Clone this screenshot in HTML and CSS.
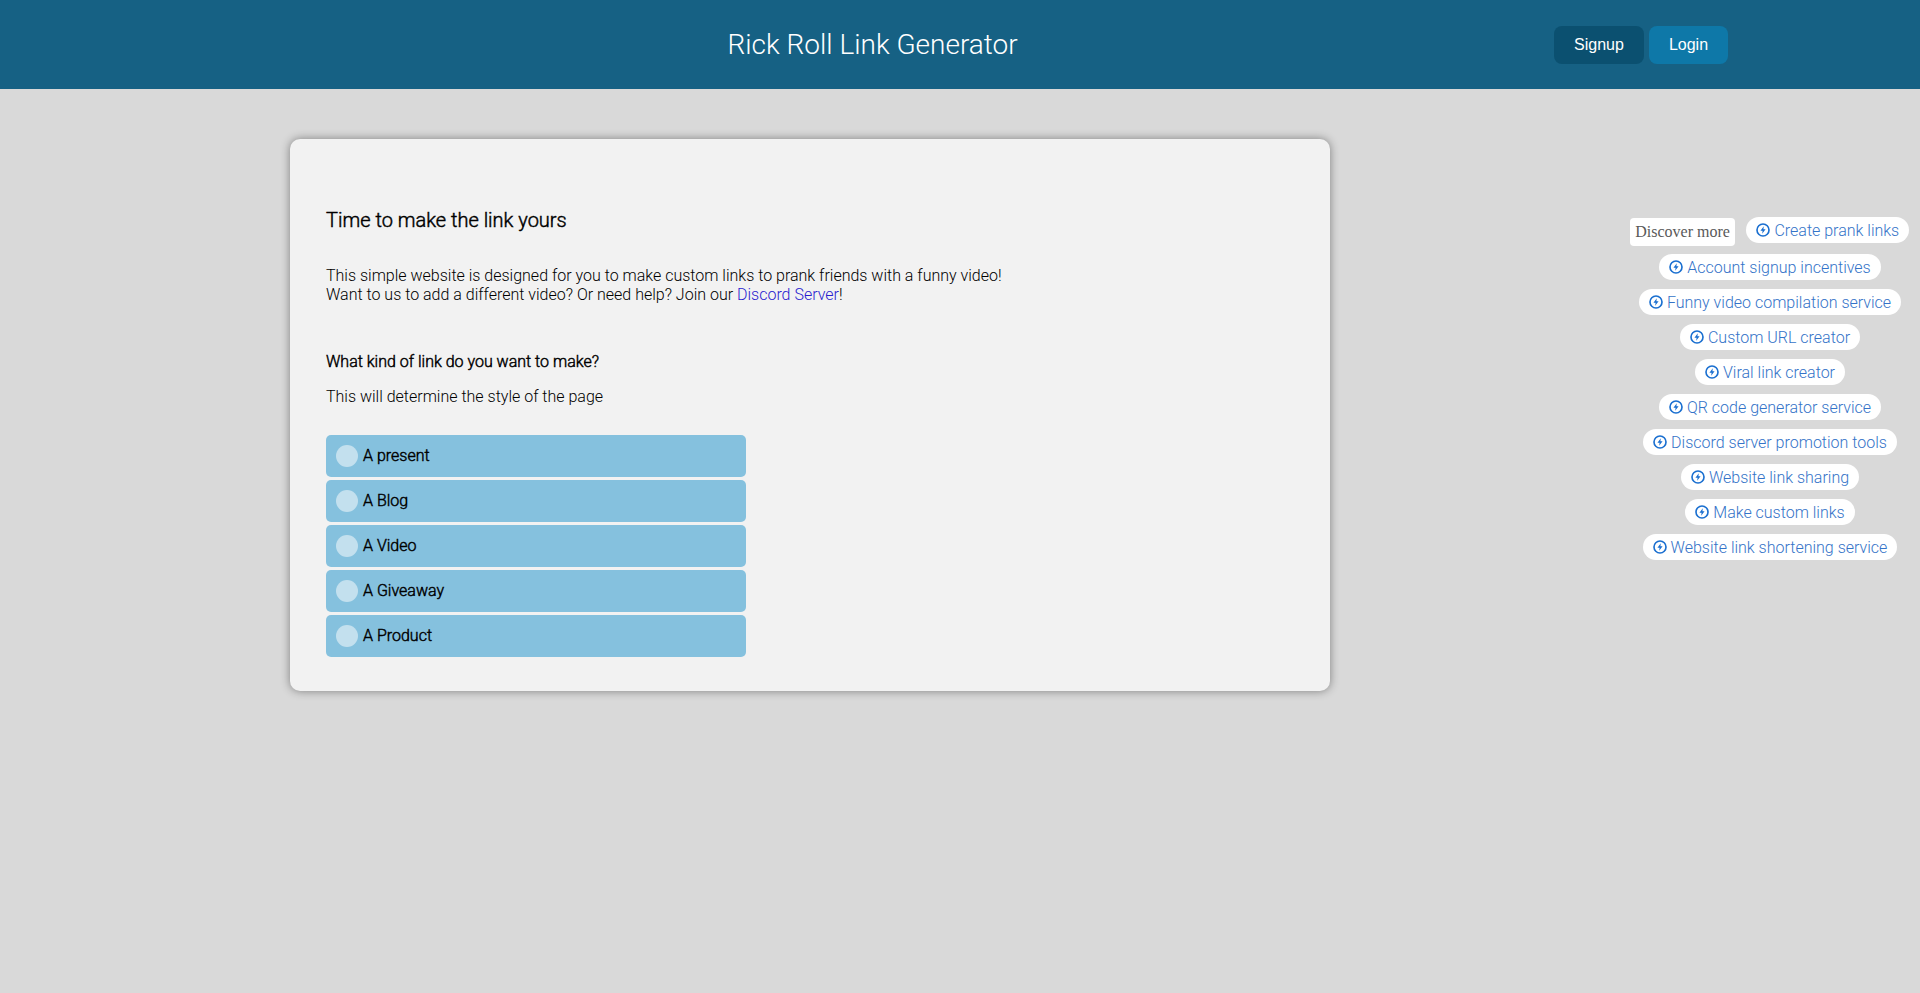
FILE: index.html
```html
<!DOCTYPE html>
<html lang="en">
<head>
<meta charset="utf-8">
<title>Rick Roll Link Generator</title>
<link rel="stylesheet" href="styles.css">
</head>
<body>
<svg class="sprite" width="0" height="0" aria-hidden="true"><symbol id="bolt" viewBox="0 0 24 24"><circle cx="12" cy="12" r="10.3" fill="none" stroke="currentColor" stroke-width="2.8"/><path d="M13.4 5.4 7.6 13.4h3.7l-.7 5.2 5.8-8h-3.7z" fill="currentColor"/></symbol></svg>
<header class="topbar">
  <h1 class="site-title">Rick Roll Link Generator</h1>
  <nav class="auth">
    <a class="btn btn-signup" href="#">Signup</a>
    <a class="btn btn-login" href="#">Login</a>
  </nav>
</header>
<div class="page">
  <main class="card">
    <h2 class="card-title">Time to make the link yours</h2>
    <p class="intro">This simple website is designed for you to make custom links to prank friends with a funny video!<br>Want to us to add a different video? Or need help? Join our <a class="discord" href="#">Discord Server</a>!</p>
    <h3 class="question">What kind of link do you want to make?</h3>
    <p class="hint">This will determine the style of the page</p>
    <div class="options">
      <div class="option"><span class="radio"></span><span class="option-label">A present</span></div>
      <div class="option"><span class="radio"></span><span class="option-label">A Blog</span></div>
      <div class="option"><span class="radio"></span><span class="option-label">A Video</span></div>
      <div class="option"><span class="radio"></span><span class="option-label">A Giveaway</span></div>
      <div class="option"><span class="radio"></span><span class="option-label">A Product</span></div>
    </div>
  </main>
  <aside class="side">
    <span class="discover">Discover more</span>
    <a class="pill" href="#"><svg class="ico"><use href="#bolt"/></svg>Create prank links</a>
    <a class="pill" href="#"><svg class="ico"><use href="#bolt"/></svg>Account signup incentives</a>
    <a class="pill" href="#"><svg class="ico"><use href="#bolt"/></svg>Funny video compilation service</a>
    <a class="pill" href="#"><svg class="ico"><use href="#bolt"/></svg>Custom URL creator</a>
    <a class="pill" href="#"><svg class="ico"><use href="#bolt"/></svg>Viral link creator</a>
    <a class="pill" href="#"><svg class="ico"><use href="#bolt"/></svg>QR code generator service</a>
    <a class="pill" href="#"><svg class="ico"><use href="#bolt"/></svg>Discord server promotion tools</a>
    <a class="pill" href="#"><svg class="ico"><use href="#bolt"/></svg>Website link sharing</a>
    <a class="pill" href="#"><svg class="ico"><use href="#bolt"/></svg>Make custom links</a>
    <a class="pill" href="#"><svg class="ico"><use href="#bolt"/></svg>Website link shortening service</a>
  </aside>
</div>
</body>
</html>
```
FILE: styles.css
```css
* { box-sizing: border-box; }
html, body { margin: 0; height: 100%; }
body {
  background: #d9d9d9;
  font-family: Roboto, "Liberation Sans", sans-serif;
  font-weight: 300;
  font-size: 16px;
  color: #000;
  overflow: hidden;
}
.sprite { position: absolute; }
.topbar {
  height: 89px;
  background: #166184;
  display: flex;
  align-items: center;
  padding-left: 727.5px;
}
.site-title {
  margin: 0;
  font-size: 28px;
  font-weight: 300;
  color: #fff;
  line-height: 1;
}
.auth {
  display: flex;
  gap: 5px;
  margin-left: auto;
  margin-right: 192px;
}
.btn {
  display: flex;
  align-items: center;
  justify-content: center;
  height: 38px;
  border-radius: 8px;
  color: #fff;
  text-decoration: none;
  font-family: "Liberation Sans", Arial, sans-serif;
  font-weight: 400;
  font-size: 16px;
}
.btn-signup { width: 90px; background: #0b5070; }
.btn-login { width: 79px; background: #0e78a8; }
.page {
  display: flex;
  align-items: flex-start;
  padding: 50px 0 0 290px;
}
.card {
  width: 1040px;
  height: 552px;
  background: #f2f2f2;
  border-radius: 10px;
  box-shadow: 0 0 10px rgba(0, 0, 0, .42);
  padding: 70px 36px 0;
}
.card-title {
  margin: 0;
  font-size: 20px;
  line-height: 23px;
  font-weight: 300;
  -webkit-text-stroke: .45px #000;
}
.intro {
  margin: 34px 0 0;
  line-height: 19px;
}
.discord {
  color: #2a1ccf;
  text-decoration: none;
}
.question {
  margin: 48px 0 0;
  font-size: 16px;
  line-height: 19px;
  font-weight: 300;
  -webkit-text-stroke: .45px #000;
}
.hint {
  margin: 16px 0 0;
  line-height: 19px;
}
.options {
  display: flex;
  flex-direction: column;
  gap: 3px;
  width: 420px;
  margin-top: 29px;
}
.option {
  display: flex;
  align-items: center;
  height: 42px;
  padding-left: 10px;
  border-radius: 5px;
  background: #85c1de;
}
.option-label {
  margin-bottom: 2px;
  -webkit-text-stroke: .45px #000;
}
.radio {
  width: 22px;
  height: 22px;
  margin-right: 5px;
  border-radius: 50%;
  background: #c3e0ee;
}
.discover {
  height: 28px;
  margin: 1px 0 -1px -1px;
  padding: 0 5.5px;
  display: flex;
  align-items: center;
  background: #fff;
  border-radius: 4px;
  font-family: "Liberation Serif", "Times New Roman", serif;
  font-size: 16px;
  font-weight: 400;
  color: #595959;
}
.side {
  margin-left: auto;
  width: 300px;
  margin-top: 78px;
  display: flex;
  flex-wrap: wrap;
  justify-content: center;
  align-content: flex-start;
  gap: 9px 11px;
}
.pill {
  display: flex;
  align-items: center;
  height: 26px;
  padding: 0 10px;
  border-radius: 13px;
  background: #fff;
  color: #3473c8;
  text-decoration: none;
  white-space: nowrap;
}
.ico {
  width: 14px;
  height: 14px;
  margin-right: 4px;
  color: #1a6fd0;
}
```
